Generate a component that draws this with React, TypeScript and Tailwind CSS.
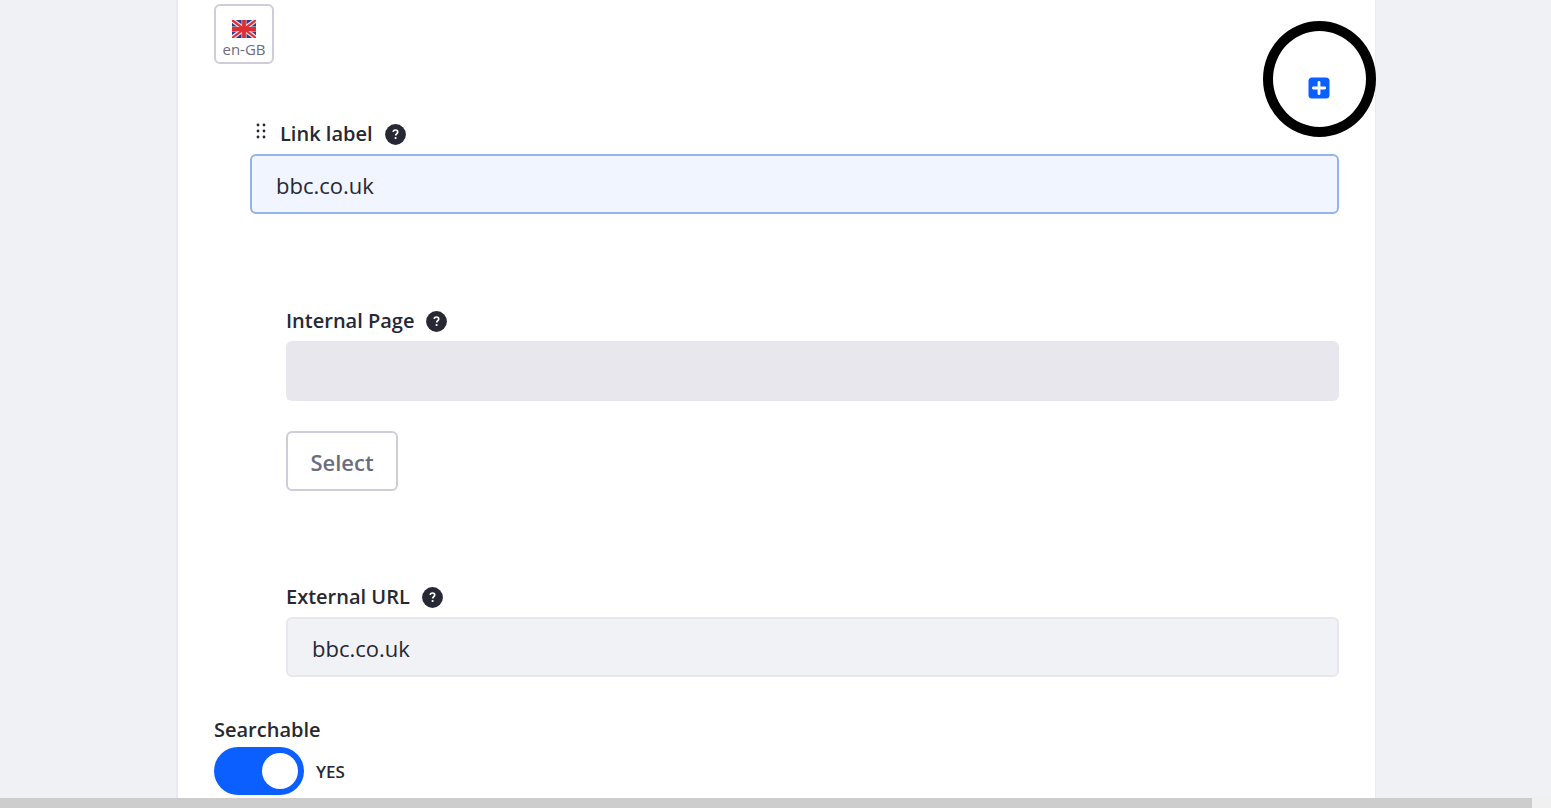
import { useState } from 'react'
import type { ReactNode } from 'react'

function HelpIcon() {
  return (
    <svg viewBox="0 0 21 21" className="size-[21px] shrink-0" aria-hidden="true">
      <circle cx="10.5" cy="10.5" r="10.4" fill="#272833" />
      <path d="M8.2 7.9c.1-1.2 1-1.9 2.3-1.9 1.4 0 2.2.8 2.2 1.9 0 1.7-2 1.6-2 3.6" fill="none" stroke="#fff" strokeWidth="1.7" />
      <circle cx="10.6" cy="14" r="1.1" fill="#fff" />
    </svg>
  )
}

function DragIcon() {
  return (
    <svg viewBox="0 0 10 16" className="h-4 w-[10px]" fill="#272833" aria-hidden="true">
      {[2, 8, 14].map(y => (
        <g key={y}>
          <circle cx="2" cy={y} r="1.4" />
          <circle cx="8" cy={y} r="1.4" />
        </g>
      ))}
    </svg>
  )
}

function PlusIcon() {
  return (
    <svg viewBox="0 0 22 22" className="size-[22px]" aria-hidden="true">
      <rect x="0.5" y="0.5" width="21" height="21" rx="3.5" fill="#0b5fff" />
      <path d="M11 5.3v11.4M5.3 11h11.4" stroke="#fff" strokeWidth="2.8" strokeLinecap="round" />
    </svg>
  )
}

function FlagIcon() {
  return (
    <svg viewBox="0 0 24 18" className="h-[18px] w-6" aria-hidden="true">
      <rect width="24" height="18" fill="#2c3a8c" />
      <path d="M0 0l24 18M24 0L0 18" stroke="#f3d9e0" strokeWidth="4.6" />
      <path d="M12 0v18M0 9h24" stroke="#f3d9e0" strokeWidth="5" />
      <path d="M0 0l24 18M24 0L0 18" stroke="#dd3338" strokeWidth="2.2" />
      <path d="M12 0v18M0 9h24" stroke="#dd2e33" strokeWidth="3.8" />
    </svg>
  )
}

function FieldLabel({ htmlFor, children }: { htmlFor: string; children: ReactNode }) {
  return (
    <div className="mb-1.5 flex h-7 items-center gap-3">
      <label htmlFor={htmlFor} className="text-[20px] font-semibold">{children}</label>
      <HelpIcon />
    </div>
  )
}

export default function App() {
  const [label, setLabel] = useState('bbc.co.uk')
  const [url, setUrl] = useState('bbc.co.uk')
  const [searchable, setSearchable] = useState(true)

  return (
    <div className="flex min-h-screen flex-col bg-[#f0f1f5] font-['Open_Sans','Noto_Sans',sans-serif] text-[#272833]">
      <div className="flex grow flex-col pr-[175px] pl-44">
        <main className="grow border-r border-l-2 border-[#e9e9ef] bg-white px-9 pt-1 pb-[3px]">
          <button type="button" className="flex size-[60px] flex-col items-center justify-end rounded-md border-2 border-[#cdced9] pb-0.5 text-[15px] leading-[22px] text-[#6b6c7e]">
            <FlagIcon />
            en-GB
          </button>

          <div className="mt-[13px] flex justify-end pr-[9px]">
            <div className="relative">
              <button type="button" aria-label="Add" className="block">
                <PlusIcon />
              </button>
              <div className="pointer-events-none absolute -top-14 -left-[45px] h-[116px] w-[113px] rounded-[50%] border-10 border-black" />
            </div>
          </div>

          <div className="mt-[21px] pl-9">
            <div className="flex gap-3.5 pl-1.5">
              <button type="button" aria-label="Reorder" className="flex h-[22px] items-center">
                <DragIcon />
              </button>
              <FieldLabel htmlFor="link-label">Link label</FieldLabel>
            </div>
            <input
              id="link-label"
              value={label}
              onChange={e => setLabel(e.target.value)}
              className="block h-[60px] w-full rounded-md border-2 border-[#94b4e6] bg-[#f0f5ff] px-6 pt-0.5 text-[22px] outline-none"
            />

            <div className="mt-[93px] pl-9">
              <FieldLabel htmlFor="internal-page">Internal Page</FieldLabel>
              <input id="internal-page" readOnly className="block h-[60px] w-full rounded-md bg-[#e7e7ed] px-6 pt-0.5 text-[22px] outline-none" />
              <button type="button" className="mt-[30px] h-[60px] w-28 rounded-md border-2 border-[#cdced9] pt-0.5 text-[22px] font-semibold text-[#6b6c7e]">
                Select
              </button>
            </div>

            <div className="mt-[92px] pl-9">
              <FieldLabel htmlFor="external-url">External URL</FieldLabel>
              <input
                id="external-url"
                value={url}
                onChange={e => setUrl(e.target.value)}
                className="block h-[60px] w-full rounded-md border-2 border-[#e7e7ed] bg-[#f1f2f5] px-6 pt-0.5 text-[22px] outline-none"
              />
            </div>
          </div>

          <div className="mt-[39px]">
            <label htmlFor="searchable" className="mb-[3px] flex h-7 items-center text-[20px] font-semibold">Searchable</label>
            <div className="flex items-center gap-3">
              <input
                id="searchable"
                type="checkbox"
                checked={searchable}
                onChange={e => setSearchable(e.target.checked)}
                className="flex h-12 w-[90px] appearance-none items-center rounded-full bg-[#cdced9] px-1.5 before:size-9 before:rounded-full before:bg-white checked:justify-end checked:bg-[#0b5fff]"
              />
              <span className="pt-0.5 text-[17px] font-semibold">{searchable ? 'YES' : 'NO'}</span>
            </div>
          </div>
        </main>
      </div>
      <div className="h-[10px] bg-[#f0f0f0] pr-[19px]">
        <div className="h-full bg-[#cdcdcd]" />
      </div>
    </div>
  )
}
